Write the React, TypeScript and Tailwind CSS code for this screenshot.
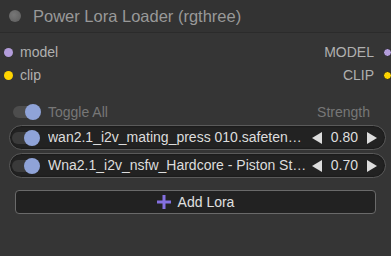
function Toggle({ muted = false }: { muted?: boolean }) {
  return (
    <div className="relative h-[16px] w-[28px] shrink-0">
      <div
        className={`absolute left-0 right-[2px] top-[2px] h-[12px] rounded-full ${
          muted ? "bg-[#4d4d4d]" : "bg-[#3a3a3a]"
        }`}
      />
      <div className="absolute right-0 top-0 h-[16px] w-[16px] rounded-full bg-[#8fa3d8]" />
    </div>
  );
}

function Arrow({ dir }: { dir: "left" | "right" }) {
  return (
    <svg width="10" height="12" viewBox="0 0 10 12" className="shrink-0">
      {dir === "left" ? (
        <polygon points="10,0 10,12 0,6" fill="#ddd" />
      ) : (
        <polygon points="0,0 0,12 10,6" fill="#ddd" />
      )}
    </svg>
  );
}

function LoraRow({ name, strength }: { name: string; strength: string }) {
  return (
    <div className="flex h-[25px] items-center rounded-full border border-[#5a5a5a] bg-[#222] pl-[2px] pr-[8px] shadow-[inset_0_0_2px_rgba(0,0,0,0.6)]">
      <Toggle />
      <span className="ml-[8px] min-w-0 flex-1 truncate text-[14px] text-[#ddd]">{name}</span>
      <div className="ml-[5px] flex items-center">
        <Arrow dir="left" />
        <span className="mx-[9px] text-[14px] text-[#ddd]">{strength}</span>
        <Arrow dir="right" />
      </div>
    </div>
  );
}

export default function App() {
  return (
    <div
      className="h-[256px] w-[391px] overflow-hidden bg-[#353535]"
      style={{ fontFamily: '"Liberation Sans", Arial, sans-serif' }}
    >
      <div className="flex h-[33px] items-center border-b border-[#2b2b2b] bg-[#333]">
        <div className="ml-[9px] h-[12px] w-[12px] rounded-full bg-[radial-gradient(circle_at_40%_40%,#777,#5c5c5c)]" />
        <span className="ml-[12px] text-[16.5px] text-[#999]">Power Lora Loader (rgthree)</span>
      </div>

      <div className="mt-[8px] flex flex-col">
        <div className="flex h-[23px] items-center">
          <div className="ml-[4px] h-[9px] w-[9px] rounded-full bg-[#b39ddb]" />
          <span className="ml-[7px] flex-1 text-[14px] text-[#b0b0b0]">model</span>
          <span className="mr-[9px] text-[14px] text-[#b0b0b0]">MODEL</span>
          <div className="-mr-[1px] h-[9px] w-[9px] rounded-full border border-[#222] bg-[#b39ddb]" />
        </div>
        <div className="flex h-[23px] items-center">
          <div className="ml-[4px] h-[9px] w-[9px] rounded-full bg-[#ffd500]" />
          <span className="ml-[7px] flex-1 text-[14px] text-[#b0b0b0]">clip</span>
          <span className="mr-[9px] text-[14px] text-[#b0b0b0]">CLIP</span>
          <div className="-mr-[1px] h-[9px] w-[9px] rounded-full border border-[#222] bg-[#ffd500]" />
        </div>
      </div>

      <div className="mt-[15px] flex h-[20px] items-center pl-[13px] pr-[21px]">
        <Toggle muted />
        <span className="ml-[7px] flex-1 text-[14px] text-[#777]">Toggle All</span>
        <span className="text-[14px] text-[#777]">Strength</span>
      </div>

      <div className="mt-[3px] flex flex-col gap-[3px] pl-[9px] pr-[5px]">
        <LoraRow name="wan2.1_i2v_mating_press 010.safetensors" strength="0.80" />
        <LoraRow name="Wna2.1_i2v_nsfw_Hardcore - Piston Style.safetensors" strength="0.70" />
      </div>

      <div className="mt-[12px] px-[15px]">
        <div className="flex h-[24px] items-center justify-center gap-[7px] rounded-[4px] border border-[#6a6a6a] bg-[#222]">
          <svg width="14" height="14" viewBox="0 0 14 14">
            <rect x="5.5" y="0" width="3" height="14" fill="#8470e0" />
            <rect x="0" y="5.5" width="14" height="3" fill="#8470e0" />
          </svg>
          <span className="text-[14px] text-[#e0e0e0]">Add Lora</span>
        </div>
      </div>
    </div>
  );
}
